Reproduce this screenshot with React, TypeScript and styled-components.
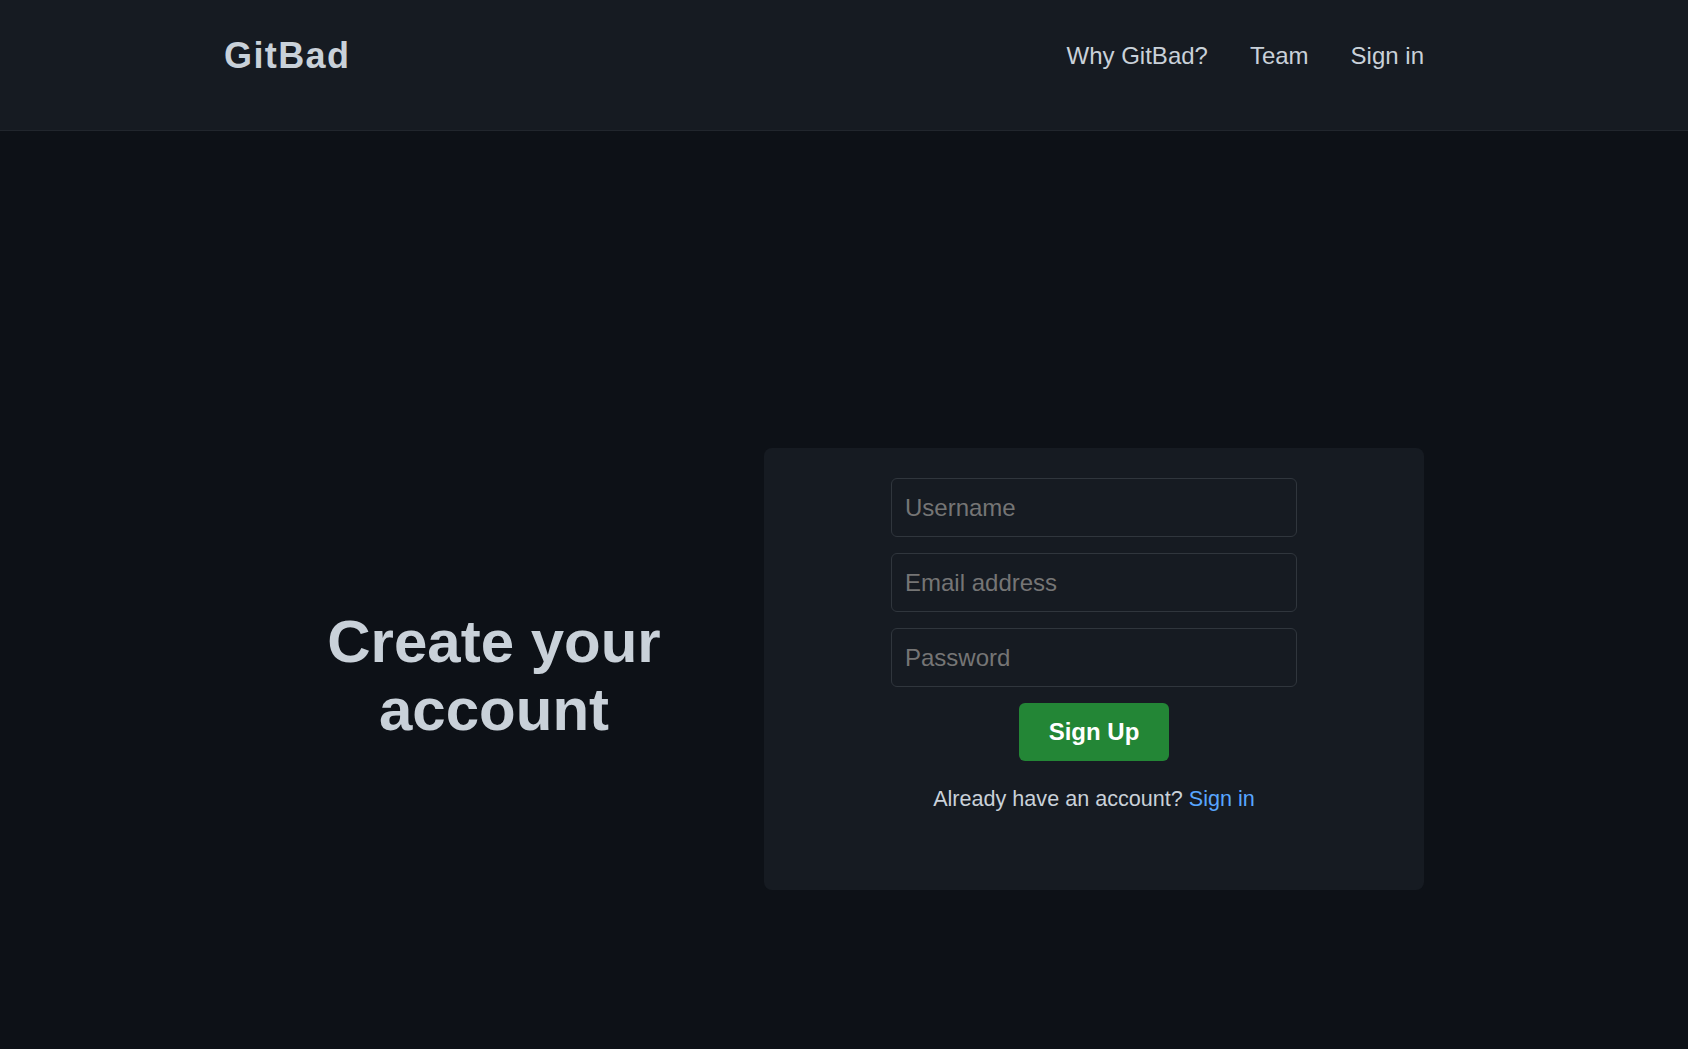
import React from "react";
import styled, { createGlobalStyle } from "styled-components";

const GlobalStyle = createGlobalStyle`
  html, body {
    margin: 0;
    padding: 0;
    background: #0d1117;
    font-family: "Liberation Sans", Arial, sans-serif;
    color: #c9d1d9;
  }
  * { box-sizing: border-box; }
`;

const Page = styled.div`
  min-height: 1049px;
  background: #0d1117;
`;

const Header = styled.header`
  background: #161b22;
  border-bottom: 1px solid #21262d;
  padding: 20px 264px 38px 224px;
`;

const HeaderRow = styled.div`
  height: 72px;
  display: flex;
  align-items: center;
  justify-content: space-between;
`;

const Logo = styled.a`
  font-size: 36px;
  font-weight: 700;
  letter-spacing: 1.4px;
  color: #c9d1d9;
  text-decoration: none;
`;

const Nav = styled.nav`
  display: flex;
  align-items: center;
  gap: 42px;
`;

const NavLink = styled.a`
  font-size: 24px;
  color: #c9d1d9;
  text-decoration: none;
`;

const Main = styled.main`
  padding: 317px 264px 0 224px;
  display: grid;
  grid-template-columns: 540px 660px;
`;

const Intro = styled.div`
  display: flex;
  align-items: center;
  justify-content: center;
  padding-top: 14px;
`;

const Title = styled.h1`
  margin: 0;
  font-size: 60px;
  line-height: 1.127;
  font-weight: 700;
  text-align: center;
  color: #c9d1d9;
`;

const Card = styled.section`
  background: #161b22;
  border-radius: 8px;
  padding: 30px 0 78px;
  display: flex;
  flex-direction: column;
  align-items: center;
`;

const Form = styled.form`
  display: flex;
  flex-direction: column;
  align-items: center;
  gap: 16px;
`;

const Input = styled.input`
  width: 406px;
  height: 59px;
  padding: 0 13px;
  background: #161b22;
  border: 1px solid #30363d;
  border-radius: 6px;
  font-family: "Liberation Sans", Arial, sans-serif;
  font-size: 24px;
  color: #c9d1d9;
  outline: none;
  &::placeholder {
    color: #757575;
  }
`;

const SubmitButton = styled.button`
  padding: 15px 30px;
  background: #238636;
  border: none;
  border-radius: 6px;
  font-family: "Liberation Sans", Arial, sans-serif;
  font-size: 24px;
  font-weight: 700;
  color: #ffffff;
  cursor: pointer;
`;

const Footnote = styled.p`
  margin: 25px 0 0;
  font-size: 21.6px;
  color: #c9d1d9;
`;

const TextLink = styled.a`
  color: #58a6ff;
  text-decoration: none;
`;

export default function App() {
  return (
    <Page>
      <GlobalStyle />
      <Header>
        <HeaderRow>
          <Logo href="#">GitBad</Logo>
          <Nav>
            <NavLink href="#">Why GitBad?</NavLink>
            <NavLink href="#">Team</NavLink>
            <NavLink href="#">Sign in</NavLink>
          </Nav>
        </HeaderRow>
      </Header>
      <Main>
        <Intro>
          <Title>
            Create your
            <br />
            account
          </Title>
        </Intro>
        <Card>
          <Form onSubmit={(e) => e.preventDefault()}>
            <Input type="text" placeholder="Username" />
            <Input type="email" placeholder="Email address" />
            <Input type="password" placeholder="Password" />
            <SubmitButton type="submit">Sign Up</SubmitButton>
          </Form>
          <Footnote>
            Already have an account? <TextLink href="#">Sign in</TextLink>
          </Footnote>
        </Card>
      </Main>
    </Page>
  );
}
